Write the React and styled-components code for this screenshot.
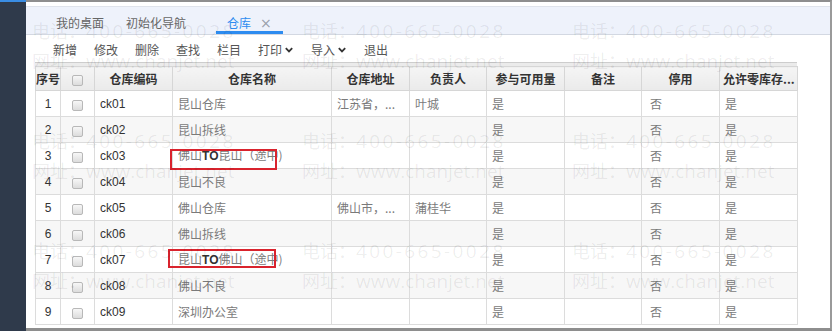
import React from 'react';
import styled, { createGlobalStyle } from 'styled-components';

const Global = createGlobalStyle`
  html, body { margin: 0; padding: 0; background: #fff; }
  body {
    width: 834px; height: 331px; overflow: hidden;
    font-family: "Noto Sans CJK SC", "Noto Sans", sans-serif;
  }
`;

const Page = styled.div`
  display: flex;
  width: 834px;
  height: 331px;
  box-sizing: border-box;
  padding-right: 2px;
`;

const Sidebar = styled.aside`
  width: 26px;
  flex: none;
  background: #2f3a4b;
  border-top: 2px solid #3a8de4;
`;

const Main = styled.main`
  flex: 1;
  position: relative;
  display: flex;
  flex-direction: column;
  border-top: 2px solid #8e8e8e;
  border-right: 2px solid #9a9a9a;
  border-bottom: 3px solid #8e8e8e;
  overflow: hidden;
`;

const TabBar = styled.nav`
  margin-top: 4px;
  height: 29px;
  box-sizing: border-box;
  display: flex;
  padding-left: 19px;
  background: #eef2fb;
  border-top: 1px solid #dfe3eb;
  border-bottom: 1px solid #d3d8e2;
`;

const Tab = styled.div`
  display: flex;
  align-items: center;
  gap: 9px;
  height: 100%;
  box-sizing: border-box;
  padding: 8px 11px 0;
  margin-left: ${p => p.$offset || 0}px;
  border-bottom: 3px solid ${p => (p.$active ? '#2d8cf0' : 'transparent')};
  color: ${p => (p.$active ? '#2d8cf0' : '#666')};
  font-size: 12px;
  line-height: 16px;
`;

const Close = styled.span`
  color: #9aa0aa;
  font-size: 14px;
  line-height: 16px;
  font-family: "DejaVu Sans", sans-serif;
`;

const Toolbar = styled.div`
  height: 27px;
  box-sizing: border-box;
  display: flex;
  align-items: center;
  padding: 3px 0 0 18.5px;
  background: #fff;
`;

const ToolButton = styled.button`
  display: flex;
  align-items: center;
  gap: 2px;
  border: 0;
  background: none;
  padding: 0 8.5px;
  font-family: "Noto Sans CJK SC", sans-serif;
  font-size: 12px;
  line-height: 16px;
  color: #555;
`;

const GridWrap = styled.div`
  margin-left: 9px;
  width: 762px;
  border-top: 1px solid #cdcdcd;
  padding-top: 3px;
  background: #ebebeb;
`;

const Table = styled.table`
  border-collapse: collapse;
  table-layout: fixed;
  width: 762px;
  background: #fff;
  font-size: 12px;
`;

const HeadRow = styled.tr`
  height: 24px;
`;

const Th = styled.th`
  border: 1px solid #d6d6d6;
  background: linear-gradient(#f5f5f5, #eaeaea);
  color: #333;
  font-weight: bold;
  padding: 0 ${p => (p.$align === 'left' ? 3 : 0)}px;
  text-align: ${p => p.$align || 'center'};
  white-space: nowrap;
  overflow: hidden;
  line-height: 16px;
`;

const Row = styled.tr`
  height: 26px;
  background: ${p => (p.$alt ? '#f7f7f7' : '#fff')};
`;

const Td = styled.td`
  position: relative;
  border: 1px solid #dcdcdc;
  padding: 0 0 0 ${p => p.$pad ?? 5}px;
  text-align: ${p => p.$align || 'left'};
  color: ${p => (p.$dark ? '#333' : '#7a7a7a')};
  font-family: ${p => (p.$latin ? '"Liberation Sans", ' : '')}"Noto Sans CJK SC", sans-serif;
  white-space: nowrap;
  line-height: 16px;
`;

const CellText = styled.div`
  overflow: hidden;
  text-overflow: ellipsis;
  white-space: nowrap;
`;

const Strong = styled.b`
  color: #333;
  font-family: "Liberation Sans", sans-serif;
`;

const Check = styled.span`
  display: inline-block;
  width: 11px;
  height: 11px;
  box-sizing: border-box;
  border: 1px solid #b8b8b8;
  border-radius: 2px;
  background: linear-gradient(#f7f7f7, #dcdcdc);
  vertical-align: middle;
`;

const Mark = styled.span`
  position: absolute;
  z-index: 2;
  left: ${p => p.$l}px;
  top: ${p => p.$t}px;
  width: ${p => p.$w}px;
  height: ${p => p.$h}px;
  box-sizing: border-box;
  border: 2px solid #d9232d;
  pointer-events: none;
`;

const WatermarkLayer = styled.div`
  position: absolute;
  z-index: 5;
  top: 14px;
  left: 6px;
  display: grid;
  grid-template-columns: repeat(3, 270px);
  grid-auto-rows: 110px;
  pointer-events: none;
`;

const WatermarkCell = styled.div`
  display: flex;
  flex-direction: column;
  font-family: "Open Sans", "Noto Sans CJK SC", sans-serif;
  font-size: 18px;
  line-height: 30px;
  color: rgba(0, 0, 0, 0.075);
  white-space: nowrap;
`;

const Spaced = styled.span`
  letter-spacing: ${p => p.$ls}px;
  font-size: 19px;
`;

const Chevron = () => (
  <svg width="10" height="10" viewBox="0 0 10 10" aria-hidden="true">
    <path d="M1.8 3.2 L5 6.4 L8.2 3.2" fill="none" stroke="#333" strokeWidth="1.8" />
  </svg>
);

const columns = [
  { key: 'no', title: '序号', width: 25, align: 'center', pad: 0, dark: true, latin: true },
  { key: 'cb', title: 'cb', width: 34, align: 'center', pad: 0 },
  { key: 'code', title: '仓库编码', width: 78, dark: true, latin: true },
  { key: 'name', title: '仓库名称', width: 159 },
  { key: 'addr', title: '仓库地址', width: 78 },
  { key: 'owner', title: '负责人', width: 77 },
  { key: 'avail', title: '参与可用量', width: 78 },
  { key: 'remark', title: '备注', width: 77 },
  { key: 'stop', title: '停用', width: 78, pad: 8 },
  { key: 'zero', title: '允许零库存...', width: 78, headAlign: 'left' },
];

const names = ['昆山仓库', '昆山拆线', null, '昆山不良', '佛山仓库', '佛山拆线', null, '佛山不良', '深圳办公室'];

const rows = names.map((name, i) => ({
  no: i + 1,
  code: `ck0${i + 1}`,
  name,
  addr: i === 0 ? '江苏省，...' : i === 4 ? '佛山市，...' : '',
  owner: i === 0 ? '叶城' : i === 4 ? '蒲桂华' : '',
  avail: '是',
  remark: '',
  stop: '否',
  zero: '是',
}));

rows[2].name = (
  <>
    佛山<Strong>TO</Strong>昆山（途中)
  </>
);
rows[2].mark = { l: -3, t: 6, w: 107, h: 21 };
rows[6].name = (
  <>
    昆山<Strong>TO</Strong>佛山（途中)
  </>
);
rows[6].mark = { l: -5, t: 2, w: 108, h: 19 };

const tabs = [
  { label: '我的桌面' },
  { label: '初始化导航' },
  { label: '仓库', active: true, offset: 19, closable: true },
];

const tools = [
  { label: '新增' },
  { label: '修改' },
  { label: '删除' },
  { label: '查找' },
  { label: '栏目' },
  { label: '打印', menu: true },
  { label: '导入', menu: true },
  { label: '退出' },
];

export default function App() {
  return (
    <>
      <Global />
      <Page>
        <Sidebar />
        <Main>
          <TabBar>
            {tabs.map(t => (
              <Tab key={t.label} $active={t.active} $offset={t.offset}>
                {t.label}
                {t.closable && <Close>×</Close>}
              </Tab>
            ))}
          </TabBar>
          <Toolbar>
            {tools.map(t => (
              <ToolButton key={t.label}>
                {t.label}
                {t.menu && <Chevron />}
              </ToolButton>
            ))}
          </Toolbar>
          <GridWrap>
            <Table>
              <colgroup>
                {columns.map(c => (
                  <col key={c.key} style={{ width: c.width }} />
                ))}
              </colgroup>
              <thead>
                <HeadRow>
                  {columns.map(c => (
                    <Th key={c.key} $align={c.headAlign}>
                      {c.key === 'cb' ? <Check /> : c.title}
                    </Th>
                  ))}
                </HeadRow>
              </thead>
              <tbody>
                {rows.map((r, i) => (
                  <Row key={r.no} $alt={i % 2 === 1}>
                    {columns.map(c => (
                      <Td
                        key={c.key}
                        $align={c.align}
                        $pad={c.pad}
                        $dark={c.dark}
                        $latin={c.latin}
                      >
                        {c.key === 'cb' ? (
                          <Check />
                        ) : (
                          <CellText>{r[c.key]}</CellText>
                        )}
                        {c.key === 'name' && r.mark && (
                          <Mark $l={r.mark.l} $t={r.mark.t} $w={r.mark.w} $h={r.mark.h} />
                        )}
                      </Td>
                    ))}
                  </Row>
                ))}
              </tbody>
            </Table>
          </GridWrap>
          <WatermarkLayer>
            {Array.from({ length: 9 }).map((_, i) => (
              <WatermarkCell key={i}>
                <span>
                  电话：<Spaced $ls={2.4}>400-665-0028</Spaced>
                </span>
                <span>
                  网址：<Spaced $ls={0}>www.chanjet.net</Spaced>
                </span>
              </WatermarkCell>
            ))}
          </WatermarkLayer>
        </Main>
      </Page>
    </>
  );
}
